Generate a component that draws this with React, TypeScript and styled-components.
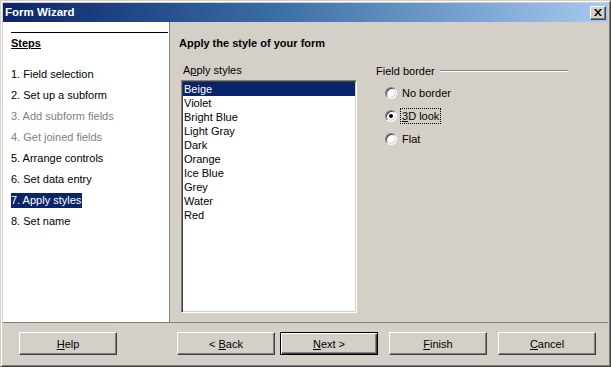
import styled, { createGlobalStyle } from 'styled-components';

const GlobalStyle = createGlobalStyle`
  html, body {
    margin: 0;
    padding: 0;
    background: #d4d0c8;
  }
  body {
    font-family: 'Liberation Sans', Arial, sans-serif;
    font-size: 11px;
    color: #000;
  }
`;

const Window = styled.div`
  box-sizing: border-box;
  width: 611px;
  height: 367px;
  padding: 2px;
  background: #d4d0c8;
  border: 1px solid;
  border-color: #d4d0c8 #404040 #404040 #d4d0c8;
  box-shadow: inset 1px 1px #fff, inset -1px -1px #808080;
  display: flex;
  flex-direction: column;
`;

const TitleBar = styled.div`
  height: 19px;
  flex-shrink: 0;
  display: flex;
  align-items: center;
  justify-content: space-between;
  padding: 0 2px 0 2px;
  background: linear-gradient(90deg, #0a246a 0%, #3a6ea5 45%, #a6caf0 100%);
`;

const TitleText = styled.span`
  color: #fff;
  font-weight: 700;
  font-size: 11.5px;
  line-height: 19px;
`;

const CloseButton = styled.div`
  box-sizing: border-box;
  width: 16px;
  height: 14px;
  background: #d4d0c8;
  border: 1px solid;
  border-color: #fff #404040 #404040 #fff;
  box-shadow: inset -1px -1px #808080;
  display: flex;
  align-items: center;
  justify-content: center;
`;

const Main = styled.div`
  height: 300px;
  flex-shrink: 0;
  display: flex;
`;

const StepsPanel = styled.div`
  box-sizing: border-box;
  width: 167px;
  padding: 10px 1px 0 8px;
  background: #fff;
  border-right: 1px solid #808080;
`;

const StepsHeading = styled.div`
  border-top: 1px solid #000;
  padding-top: 3px;
  line-height: 14px;
  font-weight: 700;
  text-decoration: underline;
`;

const StepList = styled.div`
  margin-top: 14px;
  display: flex;
  flex-direction: column;
`;

const StepItem = styled.div<{ $state: 'normal' | 'disabled' | 'active' }>`
  height: 21px;
  display: flex;
  align-items: center;
  color: ${(p) => (p.$state === 'disabled' ? '#808080' : '#000')};
`;

const StepLabel = styled.span<{ $active?: boolean }>`
  line-height: 15px;
  padding-right: 1px;
  background: ${(p) => (p.$active ? '#0a246a' : 'transparent')};
  color: ${(p) => (p.$active ? '#fff' : 'inherit')};
`;

const ContentPanel = styled.div`
  flex: 1;
  padding: 14px 0 0 9px;
`;

const PageTitle = styled.div`
  font-weight: 700;
  line-height: 14px;
  margin-bottom: 13px;
`;

const Columns = styled.div`
  display: flex;
  padding-left: 2px;
`;

const StylesColumn = styled.div`
  width: 176px;
`;

const FieldLabel = styled.div`
  line-height: 14px;
  padding-left: 2px;
  margin-bottom: 3px;
`;

const ListBox = styled.div`
  box-sizing: border-box;
  height: 233px;
  padding: 1px;
  background: #fff;
  border: 1px solid;
  border-color: #808080 #fff #fff #808080;
  box-shadow: inset 1px 1px #404040, inset -1px -1px #d4d0c8;
`;

const ListItem = styled.div<{ $selected?: boolean }>`
  height: 14px;
  line-height: 14px;
  padding-left: 1px;
  background: ${(p) => (p.$selected ? '#0a246a' : 'transparent')};
  color: ${(p) => (p.$selected ? '#fff' : '#000')};
`;

const BorderColumn = styled.div`
  width: 192px;
  margin-left: 19px;
`;

const GroupHeader = styled.div`
  display: flex;
  align-items: center;
  line-height: 14px;
  margin-top: 1px;
`;

const GroupLine = styled.div`
  flex: 1;
  height: 0;
  margin-left: 5px;
  border-top: 1px solid #808080;
  border-bottom: 1px solid #fff;
`;

const RadioList = styled.div`
  margin-top: 3px;
`;

const RadioRow = styled.div`
  height: 23px;
  display: flex;
  align-items: center;
  padding-left: 9px;
`;

const RadioCircle = styled.span<{ $checked?: boolean }>`
  box-sizing: border-box;
  width: 12px;
  height: 12px;
  border-radius: 50%;
  background: #fff;
  border: 1px solid;
  border-color: #808080 #fff #fff #808080;
  box-shadow: inset 1px 1px #404040, inset -1px -1px #d4d0c8;
  display: flex;
  align-items: center;
  justify-content: center;
  &::after {
    content: '';
    display: ${(p) => (p.$checked ? 'block' : 'none')};
    width: 4px;
    height: 4px;
    border-radius: 50%;
    background: #000;
  }
`;

const RadioLabel = styled.span<{ $focused?: boolean }>`
  margin-left: 3px;
  padding: 0 1px;
  line-height: 14px;
  border: 1px dotted ${(p) => (p.$focused ? '#000' : 'transparent')};
`;

const Footer = styled.div`
  flex: 1;
  display: flex;
  padding: 9px 0 0 16px;
  border-top: 1px solid #808080;
`;

const Button = styled.div<{ $default?: boolean; $offset?: number }>`
  box-sizing: border-box;
  width: 98px;
  height: 23px;
  margin-left: ${(p) => p.$offset ?? 0}px;
  display: flex;
  align-items: center;
  justify-content: center;
  background: #d4d0c8;
  border: 1px solid;
  border-color: ${(p) => (p.$default ? '#000' : '#fff #404040 #404040 #fff')};
  box-shadow: ${(p) =>
    p.$default
      ? 'inset 1px 1px #fff, inset -1px -1px #404040, inset -2px -2px #808080'
      : 'inset -1px -1px #808080'};
`;

const Mnemonic = styled.span`
  text-decoration: underline;
`;

const steps: { label: string; state: 'normal' | 'disabled' | 'active' }[] = [
  { label: '1. Field selection', state: 'normal' },
  { label: '2. Set up a subform', state: 'normal' },
  { label: '3. Add subform fields', state: 'disabled' },
  { label: '4. Get joined fields', state: 'disabled' },
  { label: '5. Arrange controls', state: 'normal' },
  { label: '6. Set data entry', state: 'normal' },
  { label: '7. Apply styles', state: 'active' },
  { label: '8. Set name', state: 'normal' },
];

const styles = [
  'Beige',
  'Violet',
  'Bright Blue',
  'Light Gray',
  'Dark',
  'Orange',
  'Ice Blue',
  'Grey',
  'Water',
  'Red',
];

const App = () => {
  return (
    <>
      <GlobalStyle />
      <Window>
        <TitleBar>
          <TitleText>Form Wizard</TitleText>
          <CloseButton>
            <svg width="8" height="7" viewBox="0 0 8 7">
              <path d="M0 0h2l2 2.5L6 0h2L5 3.5 8 7H6L4 4.5 2 7H0l3-3.5z" fill="#000" />
            </svg>
          </CloseButton>
        </TitleBar>
        <Main>
          <StepsPanel>
            <StepsHeading>Steps</StepsHeading>
            <StepList>
              {steps.map((s) => (
                <StepItem key={s.label} $state={s.state}>
                  <StepLabel $active={s.state === 'active'}>{s.label}</StepLabel>
                </StepItem>
              ))}
            </StepList>
          </StepsPanel>
          <ContentPanel>
            <PageTitle>Apply the style of your form</PageTitle>
            <Columns>
              <StylesColumn>
                <FieldLabel>
                  A<Mnemonic>p</Mnemonic>ply styles
                </FieldLabel>
                <ListBox>
                  {styles.map((name, i) => (
                    <ListItem key={name} $selected={i === 0}>
                      {name}
                    </ListItem>
                  ))}
                </ListBox>
              </StylesColumn>
              <BorderColumn>
                <GroupHeader>
                  Field border
                  <GroupLine />
                </GroupHeader>
                <RadioList>
                  <RadioRow>
                    <RadioCircle />
                    <RadioLabel>No border</RadioLabel>
                  </RadioRow>
                  <RadioRow>
                    <RadioCircle $checked />
                    <RadioLabel $focused>
                      <Mnemonic>3</Mnemonic>D look
                    </RadioLabel>
                  </RadioRow>
                  <RadioRow>
                    <RadioCircle />
                    <RadioLabel>Flat</RadioLabel>
                  </RadioRow>
                </RadioList>
              </BorderColumn>
            </Columns>
          </ContentPanel>
        </Main>
        <Footer>
          <Button>
            <span>
              <Mnemonic>H</Mnemonic>elp
            </span>
          </Button>
          <Button $offset={60}>
            <span>
              &lt; <Mnemonic>B</Mnemonic>ack
            </span>
          </Button>
          <Button $offset={5} $default>
            <span>
              <Mnemonic>N</Mnemonic>ext &gt;
            </span>
          </Button>
          <Button $offset={11}>
            <span>
              <Mnemonic>F</Mnemonic>inish
            </span>
          </Button>
          <Button $offset={11}>
            <span>
              <Mnemonic>C</Mnemonic>ancel
            </span>
          </Button>
        </Footer>
      </Window>
    </>
  );
};

export default App;
